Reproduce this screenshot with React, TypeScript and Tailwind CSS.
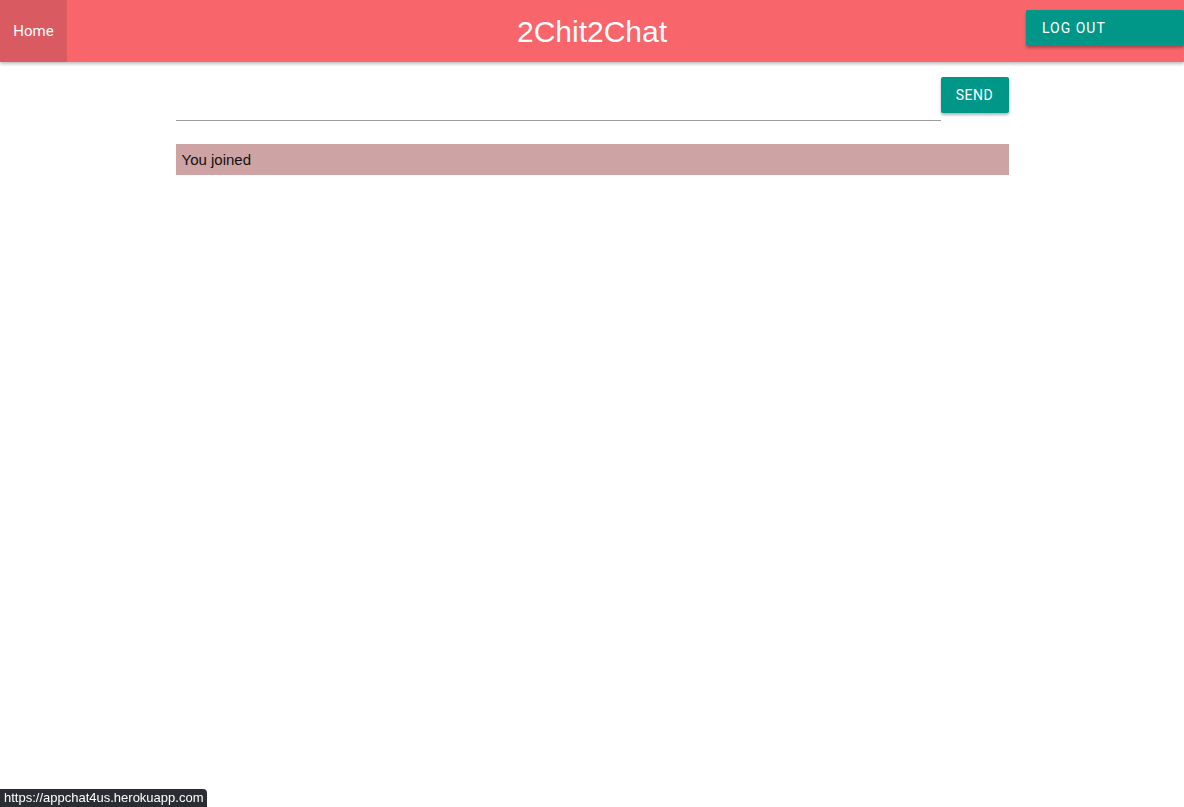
export default function App() {
  return (
    <div className="min-h-[807px] bg-white font-['Roboto','Liberation_Sans',sans-serif] relative">
      {/* navbar */}
      <nav className="relative h-[62px] bg-[#f8666c] shadow-[0_2px_3px_rgba(0,0,0,0.25)] overflow-hidden flex items-stretch">
        <a className="w-[67px] bg-[#d95a61] text-white text-[15px] flex items-center justify-center">
          Home
        </a>
        <div className="absolute left-1/2 -translate-x-1/2 top-0 h-[62px] flex items-center text-white text-[30px] font-['Helvetica','Liberation_Sans',sans-serif]">
          2Chit2Chat
        </div>
        <div className="ml-auto pt-[10px]">
          <button className="w-[158px] h-[36px] bg-[#009688] text-white text-[14px] tracking-[1px] uppercase text-left pl-[16px] rounded-[2px] shadow-[0_2px_3px_rgba(0,0,0,0.3)] font-['Roboto',sans-serif]">
            Log out
          </button>
        </div>
      </nav>

      {/* content */}
      <main className="w-[833px] mx-auto pt-[15px]">
        <div className="flex items-start">
          <input
            className="flex-1 h-[44px] border-b border-[#9e9e9e] outline-none text-[16px]"
            type="text"
          />
          <button className="w-[68px] h-[36px] bg-[#009688] text-white text-[14px] tracking-[0.5px] uppercase rounded-[2px] shadow-[0_2px_3px_rgba(0,0,0,0.3)]">
            Send
          </button>
        </div>
        <div className="mt-[23px] h-[31px] pt-[2px] bg-[#cea3a4] text-[#111] text-[15px] flex items-center px-[6px] font-['Helvetica','Liberation_Sans',sans-serif]">
          You joined
        </div>
      </main>

      {/* browser status bubble */}
      <div className="fixed left-0 bottom-0 h-[18px] px-[4px] bg-[#2a2d31] text-white text-[13px] rounded-tr-[4px] flex items-center font-['Helvetica','Liberation_Sans',sans-serif]">
        https://appchat4us.herokuapp.com
      </div>
    </div>
  );
}
